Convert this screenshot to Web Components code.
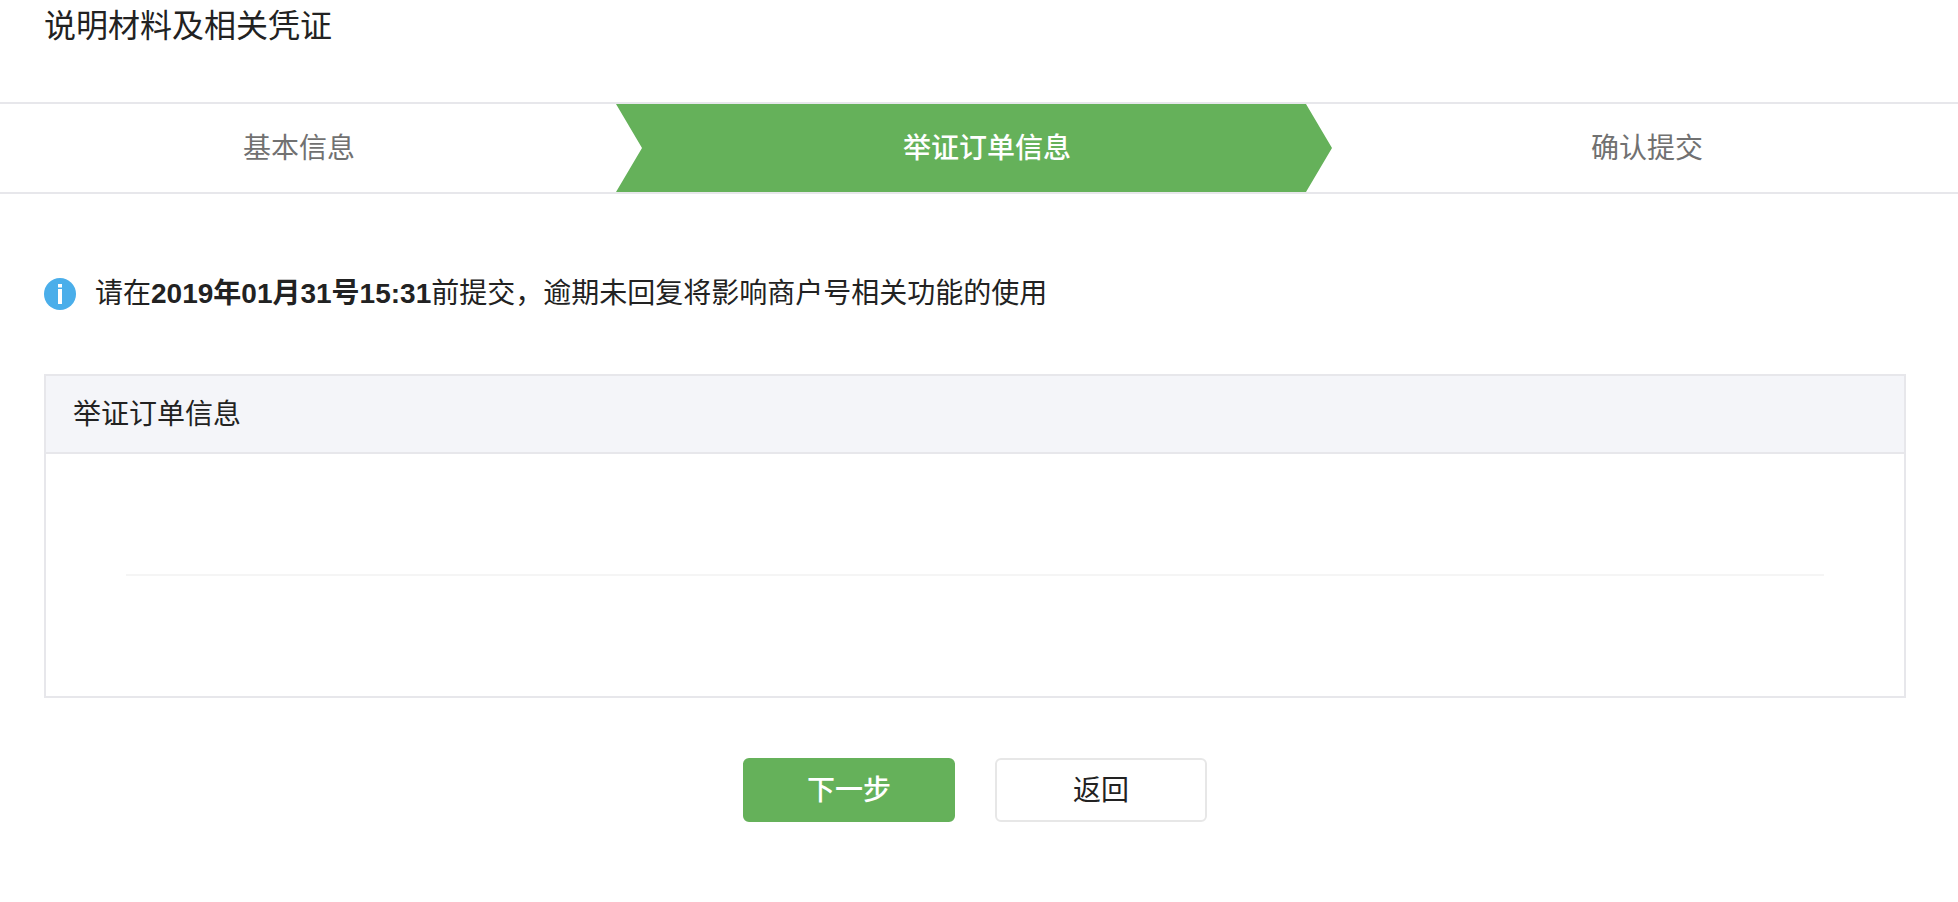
<!DOCTYPE html>
<html lang="zh-CN">
<head>
<meta charset="utf-8">
<meta name="viewport" content="width=device-width, initial-scale=1">
<title>说明材料及相关凭证</title>
<style>
    body{
        margin: 0;
        background: #fff;
        color: #222;
        font: 28px/40px "Liberation Sans", "Noto Sans CJK SC", sans-serif;
        --green: #65b15a;
        --line: #e7e7eb;
    }
</style>
</head>
<body>
<evidence-page>
    <span slot="title">说明材料及相关凭证</span>
    <step-bar slot="steps">
        <step-item>基本信息</step-item>
        <step-item active>举证订单信息</step-item>
        <step-item>确认提交</step-item>
    </step-bar>
    <info-tip>请在<b>2019年01月31号15:31</b>前提交，逾期未回复将影响商户号相关功能的使用</info-tip>
    <info-panel>
        <span slot="title">举证订单信息</span>
        <panel-divider></panel-divider>
    </info-panel>
    <action-button slot="actions" type="primary">下一步</action-button>
    <action-button slot="actions">返回</action-button>
</evidence-page>

<script>
const makeTemplate = (html) => {
    const template = document.createElement('template')
    template.innerHTML = html
    return template
}

class BaseElement extends HTMLElement {
    constructor(){
        super()
        this.attachShadow({ mode: 'open' })
        this.shadowRoot.appendChild(this.constructor.template.content.cloneNode(true))
    }
}

class EvidencePage extends BaseElement {
    static template = makeTemplate(`
<style>
    :host{
        display: block;
    }
    h1{
        margin: 0;
        padding: 2px 44px 52px;
        font-size: 32px;
        font-weight: 400;
        line-height: 48px;
    }
    main{
        padding: 80px 52px 80px 44px;
    }
    footer{
        display: flex;
        justify-content: center;
        gap: 40px;
        margin-top: 60px;
    }
</style>
<h1><slot name="title"></slot></h1>
<slot name="steps"></slot>
<main>
    <slot></slot>
    <footer><slot name="actions"></slot></footer>
</main>
`)
}

class StepBar extends BaseElement {
    static template = makeTemplate(`
<style>
    :host{
        display: grid;
        grid-template-columns: 308fr 358fr 313fr;
        border-top: 2px solid var(--line);
        border-bottom: 2px solid var(--line);
    }
</style>
<slot></slot>
`)
    connectedCallback(){
        this.setAttribute('role', 'list')
    }
}

class StepItem extends BaseElement {
    static template = makeTemplate(`
<style>
    :host{
        display: block;
        padding: 25px 0 23px;
        color: #717171;
        text-align: center;
    }
    :host(:first-child){
        padding-right: 18px;
    }
    :host(:last-child){
        padding-left: 4px;
    }
    /* notch on the left, arrow on the right */
    :host([active]){
        padding-left: 26px;
        background: var(--green);
        color: #fff;
        font-weight: 500;
        clip-path: polygon(0 0, calc(100% - 26px) 0, 100% 50%, calc(100% - 26px) 100%, 0 100%, 26px 50%);
    }
</style>
<slot></slot>
`)
    connectedCallback(){
        this.setAttribute('role', 'listitem')
        if(this.hasAttribute('active')) this.setAttribute('aria-current', 'step')
    }
}

class InfoTip extends BaseElement {
    static template = makeTemplate(`
<style>
    :host{
        display: flex;
        align-items: center;
        gap: 19px;
        margin-bottom: 60px;
    }
    svg{
        flex: none;
        width: 32px;
        height: 32px;
    }
    p{
        margin: 0;
    }
</style>
<svg viewBox="0 0 32 32" aria-hidden="true">
    <circle cx="16" cy="16" r="16" fill="#4aaeea"/>
    <path d="M14 6h4v3.5h-4zM14 11h4v15h-4z" fill="#fff"/>
</svg>
<p><slot></slot></p>
`)
}

class InfoPanel extends BaseElement {
    static template = makeTemplate(`
<style>
    :host{
        display: block;
        border: 2px solid var(--line);
    }
    h2{
        margin: 0;
        padding: 19px 27px 17px;
        border-bottom: 2px solid var(--line);
        background: #f4f5f9;
        font-size: 28px;
        font-weight: 400;
    }
    div{
        padding: 120px 80px;
    }
</style>
<h2><slot name="title"></slot></h2>
<div><slot></slot></div>
`)
}

class PanelDivider extends BaseElement {
    static template = makeTemplate(`
<style>
    :host{
        display: block;
    }
    hr{
        margin: 0;
        border: 0;
        border-top: 2px solid #f5f5f5;
    }
</style>
<hr>
`)
}

class ActionButton extends BaseElement {
    static template = makeTemplate(`
<style>
    :host{
        display: block;
    }
    button{
        min-width: 212px;
        padding: 11px 28px 9px;
        border: 2px solid #e7e7e7;
        border-radius: 6px;
        background: #fff;
        color: #222;
        font: inherit;
        cursor: pointer;
    }
    :host([type=primary]) button{
        border-color: var(--green);
        background: var(--green);
        color: #fff;
        font-weight: 500;
    }
</style>
<button type="button"><slot></slot></button>
`)
}

customElements.define('evidence-page', EvidencePage)
customElements.define('step-bar', StepBar)
customElements.define('step-item', StepItem)
customElements.define('info-tip', InfoTip)
customElements.define('info-panel', InfoPanel)
customElements.define('panel-divider', PanelDivider)
customElements.define('action-button', ActionButton)
</script>
</body>
</html>
